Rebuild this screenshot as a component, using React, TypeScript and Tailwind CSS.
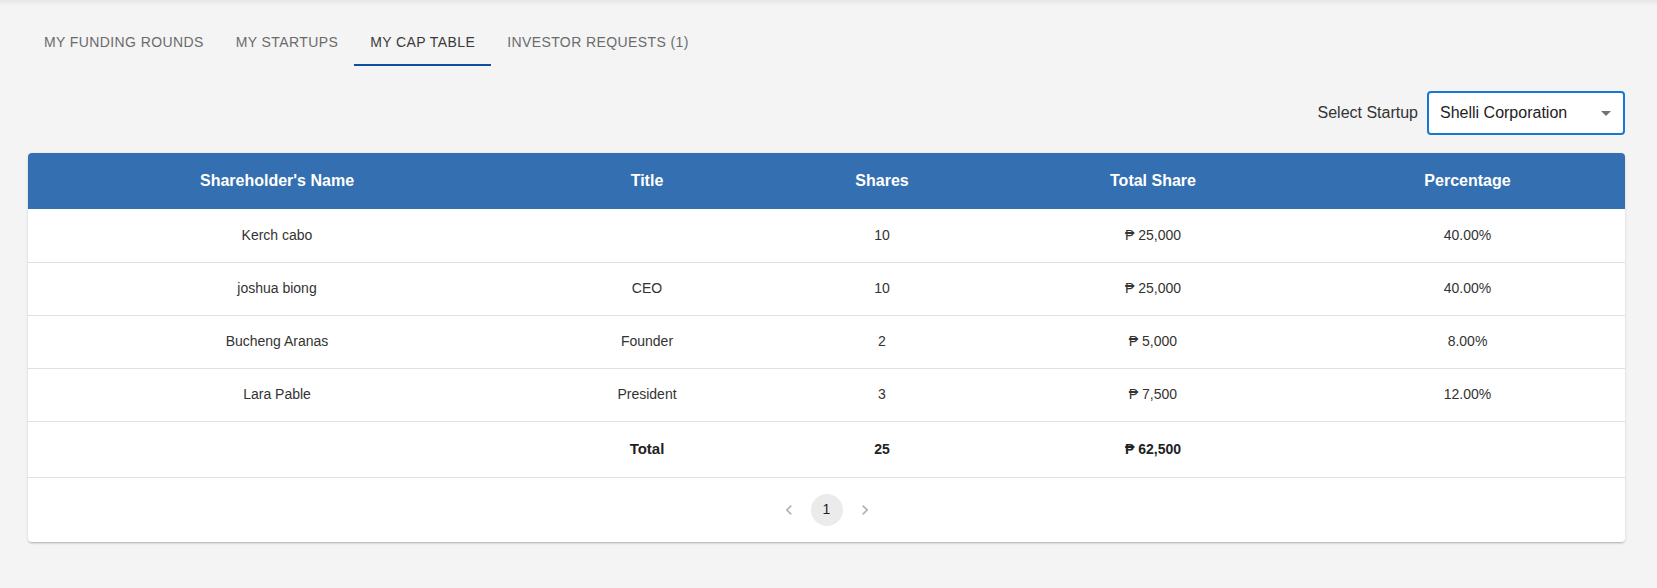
import { useState } from "react"

const tabs = ["My Funding Rounds", "My Startups", "My Cap Table", "Investor Requests (1)"]

const rows = [
  { name: "Kerch cabo", title: "", shares: 10, total: "₱ 25,000", pct: "40.00%" },
  { name: "joshua biong", title: "CEO", shares: 10, total: "₱ 25,000", pct: "40.00%" },
  { name: "Bucheng Aranas", title: "Founder", shares: 2, total: "₱ 5,000", pct: "8.00%" },
  { name: "Lara Pable", title: "President", shares: 3, total: "₱ 7,500", pct: "12.00%" },
]

function Chevron({ dir }: { dir: "left" | "right" }) {
  return (
    <svg width="20" height="20" viewBox="0 0 24 24" className="fill-black/30">
      {dir === "left" ? (
        <path d="M15.41 7.41 14 6l-6 6 6 6 1.41-1.41L10.83 12z" />
      ) : (
        <path d="M10 6 8.59 7.41 13.17 12l-4.58 4.59L10 18l6-6z" />
      )}
    </svg>
  )
}

export default function App() {
  const [active, setActive] = useState(2)

  return (
    <div className="min-h-[588px] bg-[#f4f4f4] font-['Liberation_Sans',Arial,sans-serif] text-[#333] shadow-[inset_0_5px_5px_-3px_rgba(0,0,0,0.08)]">
      <div className="pl-[28px] pr-[32px] pt-[18px]">
        {/* Tabs */}
        <div className="flex h-[48px]">
          {tabs.map((t, i) => (
            <button
              key={t}
              onClick={() => setActive(i)}
              className={`relative h-[48px] px-4 text-[14px] uppercase tracking-[0.4px] ${
                i === active ? "text-[#3a3a3a]" : "text-[#6b6b6b]"
              }`}
            >
              {t}
              {i === active && <span className="absolute bottom-0 left-0 right-0 h-[2px] bg-[#0d4ea0]" />}
            </button>
          ))}
        </div>

        {/* Startup select */}
        <div className="mt-[25px] flex items-center justify-end gap-[9px]">
          <span className="text-[16px] text-[#333]">Select Startup</span>
          <div className="relative flex h-[44px] w-[198px] items-center rounded-[4px] border-2 border-[#1976d2] bg-white pl-[11px] text-[16px] text-[#222]">
            Shelli Corporation
            <svg width="24" height="24" viewBox="0 0 24 24" className="absolute right-[5px] top-1/2 -translate-y-1/2 fill-black/55">
              <path d="M7 10l5 5 5-5z" />
            </svg>
          </div>
        </div>

        {/* Cap table card */}
        <div className="mt-[18px] overflow-hidden rounded-[4px] bg-white shadow-[0_2px_2px_-1px_rgba(0,0,0,0.2),0_1px_3px_0_rgba(0,0,0,0.12)]">
          <table className="w-full table-fixed border-collapse text-center">
            <colgroup>
              <col className="w-[498px]" />
              <col className="w-[242px]" />
              <col className="w-[228px]" />
              <col className="w-[314px]" />
              <col />
            </colgroup>
            <thead>
              <tr className="h-[56px] bg-[#3470b1] text-[16px] font-bold text-white">
                <th>Shareholder's Name</th>
                <th>Title</th>
                <th>Shares</th>
                <th>Total Share</th>
                <th>Percentage</th>
              </tr>
            </thead>
            <tbody className="text-[14px]">
              {rows.map((r) => (
                <tr key={r.name} className="h-[53px] border-b border-[#e0e0e0]">
                  <td>{r.name}</td>
                  <td>{r.title}</td>
                  <td>{r.shares}</td>
                  <td>{r.total}</td>
                  <td>{r.pct}</td>
                </tr>
              ))}
              <tr className="h-[56px] border-b border-[#e0e0e0] font-bold text-[#222]">
                <td />
                <td className="text-[15px]">Total</td>
                <td>25</td>
                <td>₱ 62,500</td>
                <td />
              </tr>
            </tbody>
          </table>

          {/* Pagination */}
          <div className="flex h-[64px] items-center justify-center gap-[6px]">
            <div className="flex h-[32px] w-[32px] items-center justify-center">
              <Chevron dir="left" />
            </div>
            <div className="flex h-[32px] w-[32px] items-center justify-center rounded-full bg-[#ebebeb] text-[14px] text-[#222]">
              1
            </div>
            <div className="flex h-[32px] w-[32px] items-center justify-center">
              <Chevron dir="right" />
            </div>
          </div>
        </div>
      </div>
    </div>
  )
}
